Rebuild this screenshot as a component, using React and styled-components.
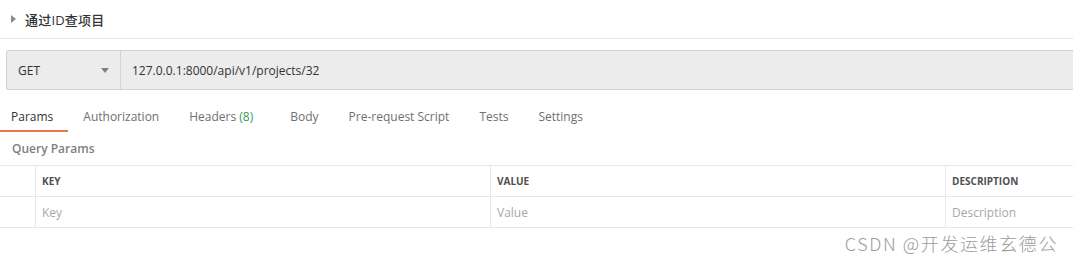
import styled, { createGlobalStyle } from "styled-components";

const GlobalStyle = createGlobalStyle`
  body {
    margin: 0;
    background: #ffffff;
    font-family: "Open Sans", "Noto Sans CJK SC", sans-serif;
  }
`

const tabs = [
  { name: 'Params', active: true },
  { name: 'Authorization' },
  { name: 'Headers', count: 8 },
  { name: 'Body' },
  { name: 'Pre-request Script' },
  { name: 'Tests' },
  { name: 'Settings' },
]

const columns = ['KEY', 'VALUE', 'DESCRIPTION']
const placeholders = ['Key', 'Value', 'Description']

export default function App() {
  return (
    <>
      <GlobalStyle />
      <Page>
        <TitleRow>
          <Caret />
          <Title>通过ID查项目</Title>
        </TitleRow>

        <RequestBar>
          <Method>
            GET
            <DropArrow />
          </Method>
          <Url>127.0.0.1:8000/api/v1/projects/32</Url>
        </RequestBar>

        <Tabs>
          {tabs.map((tab, i) =>
            <Tab key={i} $active={tab.active} $first={i === 0}>
              {tab.name}
              {tab.count && <Count> ({tab.count})</Count>}
            </Tab>
          )}
        </Tabs>

        <SectionLabel>Query Params</SectionLabel>

        <Table>
          <Cell />
          {columns.map(c => <HeadCell key={c}>{c}</HeadCell>)}
          <Cell />
          {placeholders.map(p => <Cell key={p} $placeholder>{p}</Cell>)}
        </Table>

        <Watermark>CSDN @开发运维玄德公</Watermark>
      </Page>
    </>
  )
}

const Page = styled.div`
  position: relative;
  width: 1073px;
  height: 263px;
  overflow: hidden;
`
const TitleRow = styled.div`
  display: flex;
  align-items: center;
  height: 38px;
  padding-left: 11px;
  border-bottom: 1px solid #e6e6e6;
`
const Caret = styled.span`
  width: 0;
  height: 0;
  border-top: 4px solid transparent;
  border-bottom: 4px solid transparent;
  border-left: 5px solid #8a8a8a;
  margin-right: 9px;
  margin-top: -1px;
`
const Title = styled.span`
  font-size: 13px;
  font-weight: 500;
  color: #333333;
  letter-spacing: 0.2px;
`
const RequestBar = styled.div`
  display: flex;
  height: 38px;
  margin: 11px 0 0 6px;
  border: 1px solid #d3d3d3;
  border-right: none;
  border-radius: 3px 0 0 3px;
  background: #ececec;
`
const Method = styled.div`
  display: flex;
  align-items: center;
  justify-content: space-between;
  width: 114px;
  box-sizing: border-box;
  padding: 0 11px 0 11px;
  border-right: 1px solid #d3d3d3;
  font-size: 12px;
  color: #333333;
`
const DropArrow = styled.span`
  width: 0;
  height: 0;
  border-left: 4px solid transparent;
  border-right: 4px solid transparent;
  border-top: 5px solid #808080;
`
const Url = styled.div`
  display: flex;
  align-items: center;
  padding-left: 11px;
  font-size: 12px;
  color: #333333;
`
const Tabs = styled.div`
  display: flex;
  margin-top: 10px;
  height: 32px;
`
const Tab = styled.div`
  display: flex;
  align-items: center;
  box-sizing: border-box;
  padding: ${p => (p.$first ? '2px 15px 0 11px' : '2px 15px 0 15px')};
  font-size: 12px;
  color: ${p => (p.$active ? '#333333' : '#707070')};
  border-bottom: 2px solid ${p => (p.$active ? '#e8784c' : 'transparent')};
  white-space: pre;
`
const Count = styled.span`
  color: #3b9a5a;
  margin-right: 7px;
`
const SectionLabel = styled.div`
  height: 33px;
  display: flex;
  align-items: center;
  padding-left: 12px;
  font-size: 12px;
  font-weight: 600;
  color: #808080;
`
const Table = styled.div`
  display: grid;
  grid-template-columns: 36px 455px 455px 1fr;
  grid-auto-rows: 31px;
  border-top: 1px solid #e8e8e8;
`
const Cell = styled.div`
  display: flex;
  align-items: center;
  padding-left: 6px;
  border-bottom: 1px solid #e8e8e8;
  border-right: 1px solid #e8e8e8;
  font-size: 12px;
  color: ${p => (p.$placeholder ? '#a8a8a8' : '#333333')};
  &:nth-child(4n) {
    border-right: none;
  }
`
const HeadCell = styled(Cell)`
  font-size: 10px;
  font-weight: 700;
  color: #505050;
`
const Watermark = styled.div`
  position: absolute;
  right: 15px;
  top: 230px;
  font-family: "Noto Sans CJK SC", sans-serif;
  font-size: 18px;
  font-weight: 300;
  color: #9c9c9c;
  letter-spacing: 1.6px;
`
